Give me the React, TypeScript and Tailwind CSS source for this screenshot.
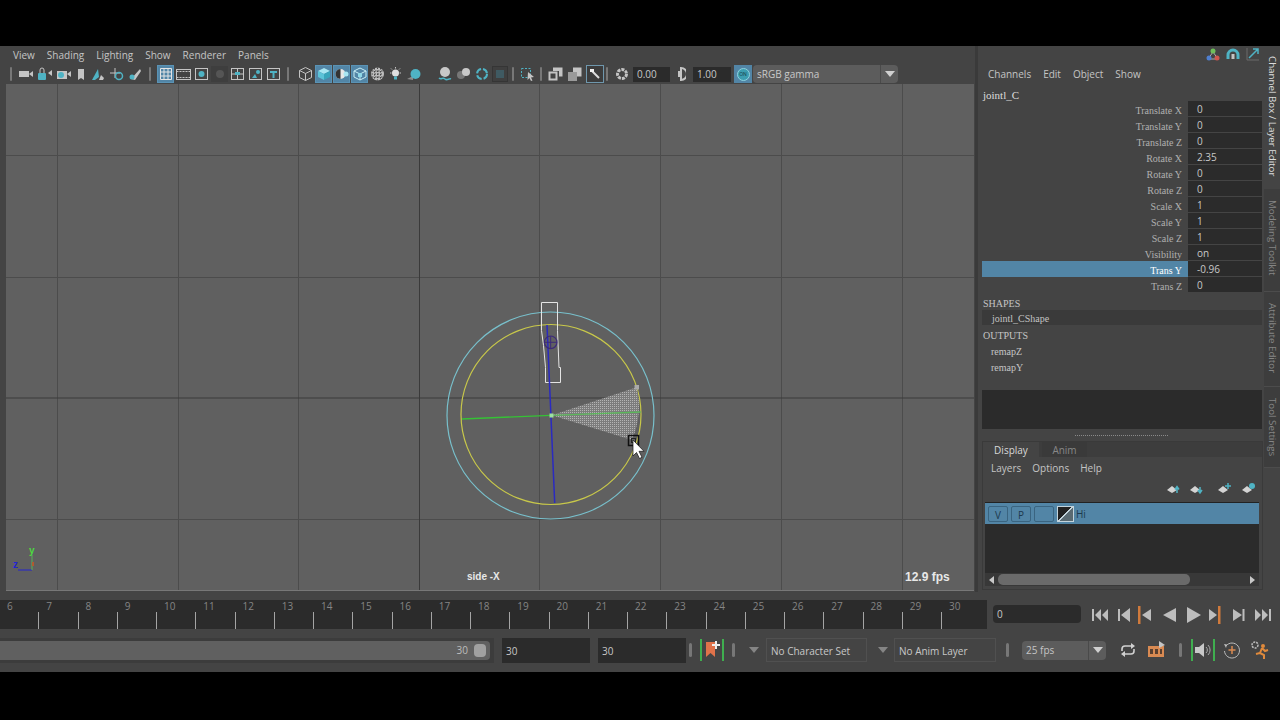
import type { ReactNode } from "react"

const ui = "font-['Open_Sans',sans-serif]"
const serif = "font-['Liberation_Serif',serif]"

function Ico({ w = 16, children }: { w?: number; children: ReactNode }) {
  return (
    <svg width={w} height={16} viewBox={`0 0 ${w} 16`} className="shrink-0">
      {children}
    </svg>
  )
}

function Sep({ className = "" }: { className?: string }) {
  return <div className={`h-[14px] rounded-sm bg-[#777] shrink-0 ${className}`} />
}

function Toggled({ children, className = "" }: { children: ReactNode; className?: string }) {
  return (
    <div className={`w-[17px] h-[18px] flex items-center justify-center bg-[#5285a6] border border-[#5a93b5] shrink-0 ${className}`}>
      {children}
    </div>
  )
}

function Toolbar() {
  const g = "#c4c4c4"
  const t = "#4fb3c4"
  return (
    <div className={`h-[20px] flex items-center pl-[10px] text-[10px] text-[#c8c8c8] ${ui}`}>
      <Sep className="w-[2px] mr-[6px]" />
      <div className="flex items-center gap-[3px]">
        <Ico><rect x="1" y="5" width="10" height="6" fill={g} /><path d="M11 8l4-3v6z" fill={g} /></Ico>
        <Ico><rect x="1" y="7" width="8" height="7" rx="1" fill={t} /><path d="M3 7V4a2 2 0 014 0v3" stroke={g} fill="none" /><path d="M11 7l4-3v6z" fill={g} /></Ico>
        <Ico><rect x="1" y="5" width="10" height="8" fill={g} /><circle cx="5" cy="9" r="3" fill={t} /><path d="M11 8l4-3v6z" fill={g} /></Ico>
        <Ico w={12}><path d="M3 3h6v11l-3-2-3 2z" fill={g} /></Ico>
        <Ico><path d="M2 14L8 3l1 8-4 3z" fill={t} /><path d="M9 14l2-5 3 3-1 2z" fill={g} /></Ico>
        <Ico><path d="M6 2v10M1 7h10" stroke={g} /><circle cx="10" cy="10" r="3.5" stroke={t} strokeWidth="1.5" fill="none" /></Ico>
        <Ico><path d="M3 13l9-10 1 2-6 9z" fill={g} /><circle cx="4" cy="11" r="2.5" fill={t} /></Ico>
      </div>
      <Sep className="w-[2px] ml-[5px] mr-[6px]" />
      <div className="flex items-center gap-[1px]">
        <Toggled>
          <svg width="12" height="12" viewBox="0 0 12 12"><path d="M.5.5h11v11H.5zM4 .5v11M8 .5v11M.5 4h11M.5 8h11" stroke="#e4e4e4" fill="none" /></svg>
        </Toggled>
        <Ico w={17}><rect x="1.5" y="3.5" width="14" height="10" stroke={g} fill="none" /><path d="M1.5 5.500h14M1.500 11.500h14" stroke={g} strokeDasharray="2 1" /></Ico>
        <Ico w={17}><rect x="2.5" y="2.5" width="12" height="11" stroke={g} fill="none" /><circle cx="8.500" cy="8" r="3" fill={t} /></Ico>
        <div className="w-[17px] h-[16px] bg-[#3e3e3e] flex items-center justify-center shrink-0">
          <div className="w-[8px] h-[8px] rounded-full bg-[#555]" />
        </div>
        <Ico w={17}><rect x="2.5" y="2.5" width="12" height="11" stroke={g} fill="none" /><path d="M8.500 2v12M2 8h4M11 8h4" stroke={g} /><rect x="6" y="6" width="5" height="3" fill={t} /></Ico>
        <Ico w={17}><rect x="2.5" y="2.5" width="12" height="11" stroke={g} fill="none" /><path d="M5 12l3-4 2 4z" fill={t} /><circle cx="11" cy="6" r="2" fill={t} /></Ico>
        <Ico w={17}><rect x="2.5" y="2.5" width="12" height="11" stroke={g} fill="none" /><path d="M5 5h7v2H9.500v5h-2V7H5z" fill={t} /></Ico>
      </div>
      <Sep className="w-[2px] ml-[5px] mr-[8px]" />
      <div className="flex items-center gap-[1px]">
        <Ico w={17}><path d="M8.500 1.500l6 3v7l-6 3-6-3v-7zM2.500 4.500l6 3 6-3M8.500 7.500v7" stroke={g} fill="none" /></Ico>
        <Toggled>
          <svg width="14" height="14" viewBox="0 0 14 14"><path d="M7 1l6 3-6 3-6-3z" fill="#a8e6f2" /><path d="M1 4l6 3v6l-6-3z" fill="#5cc3d8" /><path d="M13 4l-6 3v6l6-3z" fill="#3aa5bb" /></svg>
        </Toggled>
        <Toggled>
          <svg width="14" height="14" viewBox="0 0 14 14"><circle cx="5.500" cy="7" r="5" fill="#e6e6e6" /><path d="M5.500 2a5 5 0 000 10z" fill="#333" /><circle cx="11" cy="7" r="2.500" fill="#a8e6f2" /></svg>
        </Toggled>
        <Toggled>
          <svg width="14" height="14" viewBox="0 0 14 14"><path d="M7 1l6 3v6l-6 3-6-3V4zM1 4l6 3 6-3M7 7v6" stroke="#c9eef5" fill="none" /><rect x="5" y="6" width="4" height="4" fill="#8fd8e6" /></svg>
        </Toggled>
        <Ico w={17}>
          <circle cx="8.500" cy="8" r="6.500" fill="#bcbcbc" />
          <path d="M3 5h11M2.500 8h12M3 11h11M5.500 2v12M8.500 1.500v13M11.500 2v12" stroke="#444" strokeDasharray="1.500 1.500" />
        </Ico>
        <Ico w={17}><circle cx="8.500" cy="7" r="3.500" fill="#e0e0e0" /><rect x="7" y="10.500" width="3" height="3" fill={t} /><path d="M8.500 1v1.500M3 7h1.500M12.500 7H14M4 2.500l1 1M13 2.500l-1 1" stroke={g} /></Ico>
        <Ico w={17}><path d="M2 13l6-3v4z" fill="#8a8a8a" /><circle cx="10.500" cy="8" r="5" fill={t} /></Ico>
      </div>
      <div className="flex items-center gap-[3px] ml-[15px]">
        <Ico><circle cx="8" cy="6" r="5" fill="#c8c8c8" /><path d="M2 12c2 2 4-1 6 1s4-1 6 0" stroke={t} fill="none" strokeWidth="1.500" /></Ico>
        <Ico><circle cx="5" cy="9" r="4" fill="#777" /><circle cx="10" cy="6" r="4" fill="#c8c8c8" /></Ico>
        <Ico w={14}><circle cx="7" cy="8" r="5" stroke={t} strokeWidth="2" fill="none" strokeDasharray="6 2" /></Ico>
        <div className="w-[16px] h-[16px] bg-[#3f3f3f] border border-[#353535] flex items-center justify-center shrink-0">
          <div className="w-[8px] h-[8px] bg-[#3f5a62]" />
        </div>
      </div>
      <Sep className="w-[2px] ml-[4px] mr-[6px]" />
      <Ico><rect x="1.500" y="2.500" width="9" height="9" stroke={t} strokeDasharray="2 1.500" fill="none" /><path d="M8 6l6 5-3 .5 1.500 3-1.500.5-1.500-3-2 2z" fill={g} /></Ico>
      <Sep className="w-[2px] ml-[4px] mr-[6px]" />
      <div className="flex items-center gap-[3px]">
        <Ico><path d="M5 1.500h9.500v9H11V5H5z" fill={g} /><rect x="1.500" y="6.500" width="7" height="7" stroke={g} strokeWidth="2" fill="none" /></Ico>
        <Ico><path d="M6 1.500h8.500v9H10V6H6z" fill={g} /><rect x="1" y="6" width="9" height="9" fill="#9a9a9a" /></Ico>
        <div className="w-[18px] h-[18px] flex items-center justify-center border border-[#6f97ad] bg-[#3c3c3c] shrink-0">
          <svg width="12" height="12" viewBox="0 0 12 12"><path d="M2 2l8 8" stroke="#ddd" strokeWidth="2" /><rect x="1" y="1" width="4" height="3" fill="#eee" /></svg>
        </div>
      </div>
      <Sep className="w-[2px] ml-[2px] mr-[7px]" />
      <Ico w={14}><circle cx="7" cy="8" r="4.500" stroke={g} strokeWidth="3" fill="none" strokeDasharray="3 1" /></Ico>
      <div className="w-[37px] h-[15px] ml-[4px] bg-[#2b2b2b] pl-[4px] leading-[15px] shrink-0">0.00</div>
      <div className="ml-[6px] shrink-0 flex items-center">
        <Ico w={10}><path d="M2 5h3v6H2z" fill={g} /><path d="M5 2a6 6 0 010 12z" fill="none" stroke={g} strokeWidth="2" /></Ico>
      </div>
      <div className="w-[38px] h-[15px] ml-[7px] bg-[#2b2b2b] pl-[4px] leading-[15px] shrink-0">1.00</div>
      <div className="w-[18px] h-[18px] ml-[3px] bg-[#5285a6] flex items-center justify-center shrink-0">
        <div className="w-[13px] h-[13px] rounded-full bg-[#3c9db0] border border-[#8fd3df] flex items-center justify-center text-[5px] leading-none text-[#163a44]">ON</div>
      </div>
      <div className="w-[145px] h-[18px] ml-[1px] bg-[#5c5c5c] rounded-sm flex items-center shrink-0">
        <span className="flex-1 pl-[4px] text-[#c9c9c9]">sRGB gamma</span>
        <div className="w-[18px] h-full border-l border-[#4a4a4a] flex items-center justify-center">
          <div className="w-0 h-0 border-l-[5px] border-r-[5px] border-t-[6px] border-l-transparent border-r-transparent border-t-[#d0d0d0]" />
        </div>
      </div>
    </div>
  )
}

function Viewport() {
  const menus = ["View", "Shading", "Lighting", "Show", "Renderer", "Panels"]
  return (
    <div className="w-[975px] h-[545px] flex flex-col shrink-0">
      <div className={`h-[18px] flex items-center pl-[13px] gap-[12px] text-[10px] text-[#c4c4c4] ${ui}`}>
        {menus.map((m) => (
          <span key={m}>{m}</span>
        ))}
      </div>
      <Toolbar />
      <div className="relative ml-[6px] w-[968px] h-[507px] bg-[#606060] overflow-hidden border-b border-[#777]">
        <svg width="968" height="507" viewBox="6 84 968 507" className="block">
          <defs>
            <pattern id="dots" width="2" height="2" patternUnits="userSpaceOnUse">
              <rect width="2" height="2" fill="#7c7c7c" />
              <rect width="1" height="1" fill="#b4b4b4" />
            </pattern>
          </defs>
          {[57, 178, 298, 539, 660, 781, 902].map((x) => (
            <line key={x} x1={x + 0.5} x2={x + 0.5} y1="84" y2="591" stroke="#4c4c4c" />
          ))}
          {[155, 277, 519].map((y) => (
            <line key={y} y1={y + 0.5} y2={y + 0.5} x1="6" x2="974" stroke="#4c4c4c" />
          ))}
          <line x1="419.500" x2="419.500" y1="84" y2="591" stroke="#3a3a3a" />
          <line y1="398" y2="398" x1="6" x2="974" stroke="#3a3a3a" />
          <circle cx="550.500" cy="415.500" r="103.500" fill="none" stroke="#78c0cc" strokeWidth="1.200" />
          <circle cx="551" cy="414.500" r="90" fill="none" stroke="#c8c84a" strokeWidth="1.200" />
          <path d="M551.700 415.300L636.700 387.300Q643 414 632 440z" fill="url(#dots)" />
          <path d="M541.500 302.500h16v28l1.500 37h1.500v15h-15v-15l-2-22-2-15z" fill="none" stroke="#e4e4e4" />
          <line x1="547" y1="325" x2="554.700" y2="503" stroke="#2a2ac0" strokeWidth="1.500" />
          <line x1="462" y1="419" x2="550.700" y2="415.300" stroke="#35c235" strokeWidth="1.300" />
          <line x1="551.700" y1="415.300" x2="640.700" y2="412" stroke="#5cb85c" strokeWidth="1.300" />
          <rect x="549.500" y="413.500" width="4" height="4" fill="#9edfa0" />
          <circle cx="550.700" cy="342.300" r="6.300" fill="none" stroke="#3c2a7a" strokeWidth="1.200" />
          <path d="M544.400 342.300h12.600M550.700 336v12.600" stroke="#3c2a7a" />
          <rect x="634.500" y="385" width="4.500" height="4.500" fill="#aaa" />
          <rect x="628.500" y="435.500" width="10" height="10" fill="none" stroke="#111" strokeWidth="1.500" />
          <rect x="631.500" y="438.500" width="4" height="4" fill="none" stroke="#222" />
          <path d="M633 440v16l3.500-3.500 3 6 2.500-1.200-3-6 5 0z" fill="#fff" stroke="#111" strokeWidth="0.700" />
          <path d="M32 570h-14" stroke="#2323d0" />
          <path d="M32 570v-15" stroke="#58b058" />
          <path d="M33 562v4" stroke="#b05a30" strokeWidth="2" />
        </svg>
        <span className="absolute left-[7px] top-[473px] text-[10px] font-bold text-[#2323d0] font-['Liberation_Sans',sans-serif]">z</span>
        <span className="absolute left-[23px] top-[459px] text-[10px] font-bold text-[#4ddb3f] font-['Liberation_Sans',sans-serif]">y</span>
        <span className="absolute left-[461px] top-[485px] text-[10px] font-bold text-[#e8e8e8] font-['Liberation_Sans',sans-serif]">side -X</span>
        <span className="absolute left-[899px] top-[484px] text-[12px] font-bold text-[#e8e8e8] font-['Liberation_Sans',sans-serif]">12.9 fps</span>
      </div>
    </div>
  )
}

const channels = [
  ["Translate X", "0"],
  ["Translate Y", "0"],
  ["Translate Z", "0"],
  ["Rotate X", "2.35"],
  ["Rotate Y", "0"],
  ["Rotate Z", "0"],
  ["Scale X", "1"],
  ["Scale Y", "1"],
  ["Scale Z", "1"],
  ["Visibility", "on"],
  ["Trans Y", "-0.96"],
  ["Trans Z", "0"],
]

function ChannelBox() {
  return (
    <div className="h-[383px] flex flex-col">
      <div className={`h-[20px] mt-[18px] flex items-center pl-[10px] gap-[12px] text-[10px] text-[#c4c4c4] ${ui}`}>
        <span>Channels</span>
        <span>Edit</span>
        <span>Object</span>
        <span>Show</span>
      </div>
      <div className={`h-[17px] mt-[3px] leading-[17px] pl-[5px] text-[11px] text-[#dcdcdc] ${serif}`}>jointl_C</div>
      <div className="flex flex-col mt-[-3px]">
        {channels.map(([label, value]) => {
          const active = label === "Trans Y"
          return (
            <div key={label} className="h-[16px] flex">
              <div
                className={`w-[206px] ml-[4px] pr-[6px] pt-[4px] text-right text-[10px] leading-[12px] ${serif} ${
                  active ? "bg-[#5285a6] text-white" : "text-[#b0b0b0]"
                }`}
              >
                {label}
              </div>
              <div className={`w-[74px] h-[15px] bg-[#2b2b2b] pl-[9px] text-[10px] leading-[17px] text-[#c8c8c8] ${ui}`}>
                {value}
              </div>
            </div>
          )
        })}
      </div>
      <div className={`pl-[5px] mt-[2px] text-[10px] text-[#c4c4c4] ${serif}`}>
        <div className="h-[16px] leading-[18px]">SHAPES</div>
        <div className="h-[15px] bg-[#3a3a3a] ml-[-1px] mr-[2px] pl-[10px] leading-[18px] mt-[-1px]">jointl_CShape</div>
        <div className="h-[16px] mt-[2px] leading-[18px]">OUTPUTS</div>
        <div className="h-[16px] pl-[8px] leading-[18px]">remapZ</div>
        <div className="h-[16px] pl-[8px] leading-[18px]">remapY</div>
      </div>
      <div className="h-[39px] mt-[15px] ml-[4px] mr-[2px] bg-[#2b2b2b]" />
    </div>
  )
}

function LayerIcon({ kind }: { kind: "up" | "down" | "add" | "dot" }) {
  const t = "#4fb3c4"
  return (
    <svg width="15" height="14" viewBox="0 0 15 14">
      <path d="M1 8l5-4 5 4-5 3z" fill="#d4d4d4" />
      {kind === "up" && <path d="M11 11V6M9 7.500l2-3 2 3" stroke={t} strokeWidth="1.500" fill="none" />}
      {kind === "down" && <path d="M11 5v5M9 8l2 3 2-3" stroke={t} strokeWidth="1.500" fill="none" />}
      {kind === "add" && <path d="M11 1v6M8 4h6" stroke={t} strokeWidth="1.500" />}
      {kind === "dot" && <circle cx="11" cy="4" r="3" fill={t} />}
    </svg>
  )
}

function LayerButton({ label }: { label?: string }) {
  return (
    <div className={`w-[20px] h-[16px] bg-[#5285a6] border border-[#3a6480] rounded-[2px] text-center leading-[16px] text-[10px] text-[#1d3a4e] ${ui}`}>
      {label}
    </div>
  )
}

function LayerEditor() {
  return (
    <div className="flex flex-col">
      <div className="h-[12px] flex items-center justify-center">
        <div className="w-[93px] border-t border-dotted border-[#8a8a8a]" />
      </div>
      <div className="ml-[4px] mr-[1px] h-[149px] border border-[#3a3a3a] flex flex-col">
        <div className={`h-[15px] flex bg-[#3d3d3d] text-[10px] leading-[17px] ${ui}`}>
          <div className="w-[56px] bg-[#444] text-center text-[#d8d8d8]">Display</div>
          <div className="w-[45px] ml-[3px] bg-[#3a3a3a] text-center text-[#888]">Anim</div>
        </div>
        <div className={`h-[21px] flex items-center pl-[8px] pt-[2px] gap-[11px] text-[10px] text-[#c4c4c4] ${ui}`}>
          <span>Layers</span>
          <span>Options</span>
          <span>Help</span>
        </div>
        <div className="h-[24px] flex items-center justify-end pr-[6px] pb-[3px]">
          <LayerIcon kind="up" />
          <div className="w-[8px]" />
          <LayerIcon kind="down" />
          <div className="w-[13px]" />
          <LayerIcon kind="add" />
          <div className="w-[9px]" />
          <LayerIcon kind="dot" />
        </div>
        <div className="ml-[2px] mr-[3px] h-[71px] bg-[#2b2b2b] border-t border-[#222]">
          <div className={`h-[21px] bg-[#5285a6] flex items-center pl-[3px] gap-[3px] text-[10px] text-[#1d3a4e] ${ui}`}>
            <LayerButton label="V" />
            <LayerButton label="P" />
            <LayerButton />
            <div className="w-[17px] h-[16px] border border-[#c4d4dc] bg-[linear-gradient(135deg,#222_48%,#c4d4dc_48%,#c4d4dc_52%,#5a6a72_52%)]" />
            <span className="-ml-[1px] pt-[2px]">Hi</span>
          </div>
        </div>
        <div className="ml-[2px] mr-[3px] h-[13px] flex items-center bg-[#383838]">
          <div className="ml-[4px] w-0 h-0 border-t-[4px] border-b-[4px] border-r-[5px] border-t-transparent border-b-transparent border-r-[#c8c8c8]" />
          <div className="ml-[4px] w-[192px] h-[11px] rounded-[5px] bg-[#6a6a6a]" />
          <div className="ml-auto mr-[4px] w-0 h-0 border-t-[4px] border-b-[4px] border-l-[5px] border-t-transparent border-b-transparent border-l-[#c8c8c8]" />
        </div>
      </div>
    </div>
  )
}

function SideTabs() {
  const rest = [
    { label: "Modeling Toolkit", h: "h-[103px]" },
    { label: "Attribute Editor", h: "h-[95px]" },
    { label: "Tool Settings", h: "h-[81px]" },
  ]
  return (
    <div className={`w-[16px] flex flex-col text-[9.750px] whitespace-nowrap ${ui}`}>
      <div className="h-[143px] flex items-center pt-[10px] text-[#dcdcdc] [writing-mode:vertical-rl]">
        Channel Box / Layer Editor
      </div>
      {rest.map((tab) => (
        <div key={tab.label} className={`${tab.h} bg-[#3d3d3d] border-b border-[#4c4c4c] flex items-center pt-[11px] text-[#858585] [writing-mode:vertical-rl]`}>
          {tab.label}
        </div>
      ))}
    </div>
  )
}

function RightPanel() {
  return (
    <div className="relative w-[305px] h-[546px] shrink-0 flex bg-[#444]">
      <div className="w-[3px] bg-[#3a3a3a] shrink-0" />
      <div className="w-[286px] shrink-0 flex flex-col">
        <ChannelBox />
        <LayerEditor />
      </div>
      <SideTabs />
      <div className="absolute right-[20px] top-[1px] flex gap-[6px]">
        <svg width="14" height="14" viewBox="0 0 14 14">
          <path d="M7 5L2 12M7 5l5 7M2 12h10" stroke="#aaa" />
          <circle cx="7" cy="4" r="2.500" fill="#6fbf5a" />
          <circle cx="3" cy="11" r="2.500" fill="#4f7fd0" />
          <circle cx="11" cy="11" r="2.500" fill="#d0564f" />
        </svg>
        <svg width="14" height="14" viewBox="0 0 14 14">
          <path d="M2 12V8a5 5 0 0110 0v4" stroke="#4fb3c4" strokeWidth="3" fill="none" />
          <rect x="5.500" y="7" width="3" height="5" fill="#c4c4c4" />
        </svg>
        <svg width="14" height="14" viewBox="0 0 14 14">
          <path d="M1 1v12h12" stroke="#6a6a6a" fill="none" />
          <path d="M3 11L12 2M7 2h5v5" stroke="#4fb3c4" strokeWidth="1.500" fill="none" />
        </svg>
      </div>
    </div>
  )
}

function PlayIcon({ d, w = 14, bar, className = "" }: { d: string; w?: number; bar?: number; className?: string }) {
  return (
    <svg width={w} height="18" viewBox={`0 0 ${w} 18`} className={`shrink-0 ${className}`}>
      <path d={d} fill="#bdbdbd" />
      {bar !== undefined && <rect x={bar} y="0" width="2.500" height="18" fill="#d07a3c" />}
    </svg>
  )
}

function TimeRow() {
  const frames = Array.from({ length: 25 }, (_, i) => i + 6)
  return (
    <div className="h-[29px] mt-[8px] flex items-stretch">
      <div className="w-[987px] bg-[#2b2b2b] overflow-hidden flex shrink-0">
        <div className={`flex -ml-[1px] text-[10px] text-[#858585] ${ui}`}>
          {frames.map((f) => (
            <div key={f} className="w-[39.250px] shrink-0 flex flex-col">
              <div className="h-[12px] leading-[10px] pl-[8px] pt-[1px]">{f}</div>
              <div className="w-px h-[17px] bg-[#a4a4a4]" />
            </div>
          ))}
        </div>
      </div>
      <div className={`w-[88px] h-[18px] ml-[6px] mt-[5px] bg-[#2b2b2b] rounded-sm pl-[4px] text-[10px] leading-[18px] text-[#c8c8c8] shrink-0 ${ui}`}>0</div>
      <div className="flex items-center mb-[-1px]">
        <PlayIcon className="ml-[10px]" w={18} d="M1 3h2v12H1zM10 3v12L4 9zM17 3v12l-6-6z" />
        <PlayIcon className="ml-[8px]" w={14} d="M1 3h2v12H1zM13 2v14L4 9z" />
        <PlayIcon className="ml-[6px]" w={15} bar={1} d="M14 3v12L5 9z" />
        <PlayIcon className="ml-[10px]" w={16} d="M14 2v14L1 9z" />
        <PlayIcon className="ml-[7px]" w={17} d="M2 1v16l14-8z" />
        <PlayIcon className="ml-[6px]" w={15} bar={10} d="M1 3v12l8-6z" />
        <PlayIcon className="ml-[9px]" w={14} d="M1 3v12l9-6zM10.500 3h2v12h-2z" />
        <PlayIcon className="ml-[8px]" w={18} d="M1 3v12l6-6zM8 3v12l6-6zM15 3h2v12h-2z" />
      </div>
    </div>
  )
}

function RangeRow() {
  return (
    <div className={`h-[26px] mt-[8px] flex items-center text-[10px] text-[#c8c8c8] ${ui}`}>
      <div className="w-[494px] h-[25px] bg-[#3c3c3c] shrink-0 flex items-center">
        <div className="w-[490px] h-[19px] rounded-r-sm bg-[#606060] flex items-center justify-end pr-[4px] gap-[6px]">
          <span className="text-[#bdbdbd]">30</span>
          <div className="w-[12px] h-[13px] rounded-sm bg-[#a0a0a0]" />
        </div>
      </div>
      <div className="w-[88px] h-[25px] ml-[8px] bg-[#2b2b2b] pl-[4px] leading-[27px] shrink-0">30</div>
      <div className="w-[88px] h-[25px] ml-[8px] bg-[#2b2b2b] pl-[4px] leading-[27px] shrink-0">30</div>
      <Sep className="w-[3px] ml-[3px]" />
      <div className="w-[24px] h-[22px] ml-[8px] shrink-0 relative border-l-2 border-r-2 border-[#3fae4f] flex items-center justify-center">
        <svg width="16" height="20" viewBox="0 0 16 20">
          <path d="M2 2h9v15l-4.500-4L2 17z" fill="#e0724a" />
          <path d="M12 1v8M8 5h8" stroke="#eee" strokeWidth="2" />
        </svg>
      </div>
      <Sep className="w-[3px] ml-[8px]" />
      <div className="w-0 h-0 ml-[14px] border-l-[5px] border-r-[5px] border-t-[6px] border-l-transparent border-r-transparent border-t-[#858585]" />
      <div className="w-[101px] h-[24px] ml-[7px] border border-[#505050] pl-[4px] leading-[24px] shrink-0">No Character Set</div>
      <div className="w-0 h-0 ml-[11px] border-l-[5px] border-r-[5px] border-t-[6px] border-l-transparent border-r-transparent border-t-[#858585]" />
      <div className="w-[102px] h-[24px] ml-[6px] border border-[#505050] pl-[4px] leading-[24px] shrink-0">No Anim Layer</div>
      <Sep className="w-[3px] ml-[10px]" />
      <div className="w-[84px] h-[19px] ml-[13px] bg-[#5c5c5c] rounded-sm flex items-center shrink-0">
        <span className="flex-1 pl-[4px] text-[#c4c4c4]">25 fps</span>
        <div className="w-[18px] h-full border-l border-[#4a4a4a] flex items-center justify-center">
          <div className="w-0 h-0 border-l-[5px] border-r-[5px] border-t-[6px] border-l-transparent border-r-transparent border-t-[#d0d0d0]" />
        </div>
      </div>
      <svg width="18" height="16" viewBox="0 0 18 16" className="ml-[13px] shrink-0">
        <path d="M3 9V7a3 3 0 013-3h8M15 7v2a3 3 0 01-3 3H4" fill="none" stroke="#d0d0d0" strokeWidth="1.600" />
        <path d="M12 1l4 3-4 3zM6 9l-4 3 4 3z" fill="#d0d0d0" />
      </svg>
      <svg width="19" height="18" viewBox="0 0 19 18" className="ml-[10px] shrink-0">
        <rect x="1" y="5" width="16" height="11" fill="#d98a52" />
        <path d="M3 8h3v5H3zM8 8h3v5H8zM13 8h2v5h-2z" fill="#5a4030" />
        <path d="M12 0l6 4-6 3z" fill="#c4c4c4" />
      </svg>
      <Sep className="w-[3px] ml-[13px]" />
      <div className="w-[24px] h-[22px] ml-[9px] shrink-0 border-l-2 border-r-2 border-[#3fae4f] flex items-center justify-center">
        <svg width="18" height="16" viewBox="0 0 18 16">
          <path d="M1 5h4l5-4v14l-5-4H1z" fill="#c8c8c8" />
          <path d="M12 5a4 4 0 010 6M14 3a7 7 0 010 10" fill="none" stroke="#aaa" />
        </svg>
      </div>
      <svg width="18" height="18" viewBox="0 0 18 18" className="ml-[8px] shrink-0">
        <path d="M3 5a7.500 7.500 0 11-1.500 5" fill="none" stroke="#bdbdbd" />
        <path d="M1 3l3 .5L3 7z" fill="#bdbdbd" />
        <path d="M9 5v8M5.500 9h7" stroke="#d98a52" strokeWidth="1.500" />
      </svg>
      <svg width="20" height="20" viewBox="0 0 20 20" className="ml-[9px] shrink-0">
        <circle cx="5" cy="5" r="3" fill="none" stroke="#bdbdbd" strokeWidth="1.500" strokeDasharray="2 1" />
        <circle cx="13" cy="6" r="2" fill="#e08a3c" />
        <path d="M12 8l-2 5-4 1M12 8l3 3 3-1M10 13l4 2 0 4" fill="none" stroke="#e08a3c" strokeWidth="2" />
      </svg>
    </div>
  )
}

export default function App() {
  return (
    <div className="w-[1280px] h-[720px] bg-black overflow-hidden flex flex-col">
      <div className="h-[46px] shrink-0" />
      <div className="h-[626px] shrink-0 bg-[#444]">
        <div className="flex">
          <Viewport />
          <RightPanel />
        </div>
        <TimeRow />
        <RangeRow />
      </div>
    </div>
  )
}
